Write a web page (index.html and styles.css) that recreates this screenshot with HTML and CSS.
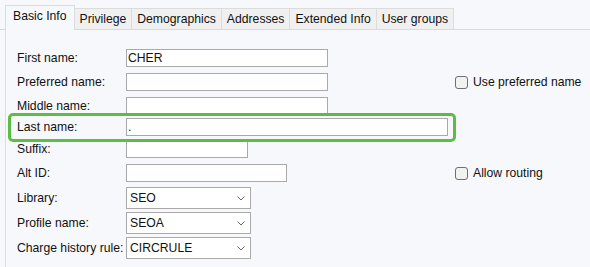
FILE: index.html
```html
<!DOCTYPE html>
<html>

<head>
    <title>User - Basic Info</title>
    <link rel="stylesheet" href="styles.css">
</head>

<body>
    <div class="tabs">
        <div class="tab active">Basic Info</div>
        <div class="tab">Privilege</div>
        <div class="tab">Demographics</div>
        <div class="tab">Addresses</div>
        <div class="tab">Extended Info</div>
        <div class="tab">User groups</div>
    </div>

    <div class="panel">
        <div class="row">
            <label for="first">First name:</label>
            <input type="text" id="first" class="w-name" value="CHER">
        </div>
        <div class="row">
            <label for="preferred">Preferred name:</label>
            <input type="text" id="preferred" class="w-name">
            <label class="check"><input type="checkbox"> Use preferred name</label>
        </div>
        <div class="row gap-3">
            <label for="middle">Middle name:</label>
            <input type="text" id="middle" class="w-name">
        </div>
        <div class="row gap-4">
            <label for="last">Last name:</label>
            <input type="text" id="last" class="w-last" value=".">
        </div>
        <div class="row">
            <label for="suffix">Suffix:</label>
            <input type="text" id="suffix" class="w-suffix">
        </div>
        <div class="row gap-5">
            <label for="altid">Alt ID:</label>
            <input type="text" id="altid" class="w-alt">
            <label class="check"><input type="checkbox"> Allow routing</label>
        </div>
        <div class="row tall gap-3">
            <label>Library:</label>
            <div class="select"><span>SEO</span><svg width="8" height="5" viewBox="0 0 8 5"><path d="M0.5 0.5 L4 4 L7.5 0.5" fill="none" stroke="#666" stroke-width="1"/></svg></div>
        </div>
        <div class="row tall gap-3">
            <label>Profile name:</label>
            <div class="select"><span>SEOA</span><svg width="8" height="5" viewBox="0 0 8 5"><path d="M0.5 0.5 L4 4 L7.5 0.5" fill="none" stroke="#666" stroke-width="1"/></svg></div>
        </div>
        <div class="row tall">
            <label>Charge history rule:</label>
            <div class="select"><span>CIRCRULE</span><svg width="8" height="5" viewBox="0 0 8 5"><path d="M0.5 0.5 L4 4 L7.5 0.5" fill="none" stroke="#666" stroke-width="1"/></svg></div>
        </div>

        <div class="highlight"></div>
    </div>
</body>

</html>
```

FILE: styles.css
```css
body {
    margin: 0;
    background: #f7f8fb;
    font-family: "Liberation Sans", Arial, sans-serif;
    font-size: 12.2px;
    color: #111;
}

.tabs {
    display: flex;
    align-items: flex-end;
    height: 29px;
    padding-left: 5px;
    border-bottom: 1px solid #dadada;
}

.tab {
    height: 20px;
    line-height: 20px;
    padding: 0 5px;
    background: #f0f0f0;
    border: 1px solid #dcdcdc;
    border-bottom: none;
    margin-right: -1px;
}

.tab.active {
    height: 24px;
    line-height: 21px;
    padding: 0 7px;
    margin-bottom: -1px;
    background: #f7f8fb;
    position: relative;
    z-index: 1;
}

.panel {
    position: relative;
    border-left: 1px solid #dedede;
    margin-left: 5px;
    padding: 19px 0 0 11px;
    min-height: 218px;
}

.row {
    display: grid;
    grid-template-columns: 109px 329px 1fr;
    align-items: center;
    height: 18px;
    margin-bottom: 6px;
}

.row.tall {
    height: 22px;
}

.gap-3 {
    margin-bottom: 3px;
}

.gap-4 {
    margin-bottom: 4px;
}

.gap-5 {
    margin-bottom: 5px;
}

.row input[type="text"] {
    box-sizing: border-box;
    height: 18px;
    padding: 0 1px;
    border: 1px solid #a9a9a9;
    background: #fff;
    font: inherit;
    color: #111;
    outline: none;
}

.w-name {
    width: 202px;
}

.w-last {
    width: 322px;
}

.w-suffix {
    width: 122px;
}

.w-alt {
    width: 161px;
}

.select {
    box-sizing: border-box;
    width: 125px;
    height: 22px;
    display: flex;
    align-items: center;
    justify-content: space-between;
    padding: 0 5px 0 3px;
    border: 1px solid #a9a9a9;
    background: #fff;
}

.check {
    display: flex;
    align-items: center;
    gap: 5px;
    white-space: nowrap;
}

.check input {
    appearance: none;
    margin: 0;
    width: 13px;
    height: 13px;
    border: 1px solid #707070;
    border-radius: 3px;
    background: #f2f2f2;
}

.highlight {
    position: absolute;
    left: 2px;
    top: 83px;
    width: 442px;
    height: 23px;
    border: 3px solid #5cbd45;
    border-radius: 5px;
    pointer-events: none;
}
```
